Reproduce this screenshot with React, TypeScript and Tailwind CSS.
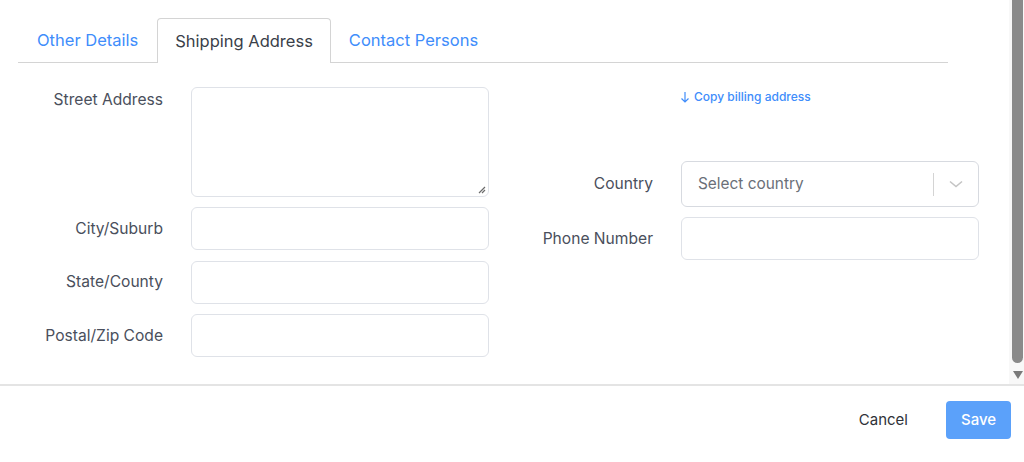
const labelCls = "text-[15.6px] text-[#4a4f5c] text-right";
const inputCls = "h-[43px] w-full rounded-md border border-[#dfe2e8] bg-white";

const Field = ({ label, tall }: { label: string; tall?: boolean }) => (
  <>
    <div className={`${labelCls} ${tall ? "pt-[1px] self-start" : "self-center"}`}>{label}</div>
    {tall ? (
      <div className="relative h-[110px] w-full rounded-md border border-[#dfe2e8] bg-white">
        <svg className="absolute bottom-[2px] right-[2px]" width="8" height="8" viewBox="0 0 8 8">
          <path d="M7 1 L1 7 M7 4 L4 7" stroke="#6b6b6b" strokeWidth="1.2" />
        </svg>
      </div>
    ) : (
      <div className={inputCls} />
    )}
  </>
);

const App = () => {
  return (
    <div className="w-[1024px] h-[462px] bg-white flex flex-col font-['Inter',sans-serif] overflow-hidden">
      <div className="flex h-[384px]">
        <div className="flex-1">
          {/* tabs */}
          <div className="ml-[18px] mt-[19px] w-[930px] h-[44px] flex items-end border-b border-[#d4d4d4]">
            <button className="h-[44px] px-[19px] text-[16.5px] text-[#408dfb]">Other Details</button>
            <button className="h-[45px] -mb-px px-[17px] text-[16.5px] text-[#3a3f4a] bg-white border border-b-0 border-[#d4d4d4] rounded-t-[4px]">
              Shipping Address
            </button>
            <button className="h-[44px] px-[18px] text-[16.5px] text-[#408dfb]">Contact Persons</button>
          </div>

          <div className="flex mt-[24px]">
            <div className="grid grid-cols-[163px_298px] gap-x-[28px] gap-y-[10.3px]">
              <Field label="Street Address" tall />
              <Field label="City/Suburb" />
              <Field label="State/County" />
              <Field label="Postal/Zip Code" />
            </div>

            <div className="ml-[31px] grid grid-cols-[133px_298px] gap-x-[28px] gap-y-[10px] content-start">
              <div />
              <div className="h-[64px] pt-[1px]">
                <button className="flex items-center gap-[4px] text-[12px] font-medium text-[#408dfb] -ml-px">
                  <svg width="10" height="12" viewBox="0 0 10 12" fill="none">
                    <path d="M5 1 V11 M1.5 7.5 L5 11 L8.5 7.5" stroke="#408dfb" strokeWidth="1.2" />
                  </svg>
                  Copy billing address
                </button>
              </div>

              <div className={`${labelCls} self-center`}>Country</div>
              <div className="h-[46px] w-full rounded-md border border-[#d7dae0] bg-white flex items-center">
                <span className="flex-1 pl-[16px] text-[15.4px] text-[#6b6f78]">Select country</span>
                <div className="w-px h-[23px] bg-[#d4d4d4]" />
                <div className="w-[44px] flex justify-center">
                  <svg width="16" height="8" viewBox="0 0 16 8" fill="none">
                    <path d="M2 1.5 L8 6.5 L14 1.5" stroke="#c4c4c4" strokeWidth="1.6" />
                  </svg>
                </div>
              </div>

              <div className={`${labelCls} self-center`}>Phone Number</div>
              <div className={inputCls} />
            </div>
          </div>
        </div>

        {/* scrollbar */}
        <div className="w-[15px] bg-[#f8f8f8] flex flex-col items-center pl-[2px]">
          <div className="w-[11px] h-[363px] bg-[#8a8a8a] rounded-b-full" />
          <div className="mt-[8px] w-0 h-0 border-l-[5.5px] border-r-[5.5px] border-t-[8px] border-l-transparent border-r-transparent border-t-[#7a7a7a]" />
        </div>
      </div>

      {/* footer */}
      <div className="border-t-2 border-[#e4e4e4] flex justify-end items-center gap-[38px] pt-[15px] pr-[13px]">
        <button className="text-[15px] text-[#2f3238]">Cancel</button>
        <button className="h-[38px] w-[65px] rounded-[4px] bg-[#5ba1fa] text-[15px] font-medium text-white">Save</button>
      </div>
    </div>
  );
};

export default App;
